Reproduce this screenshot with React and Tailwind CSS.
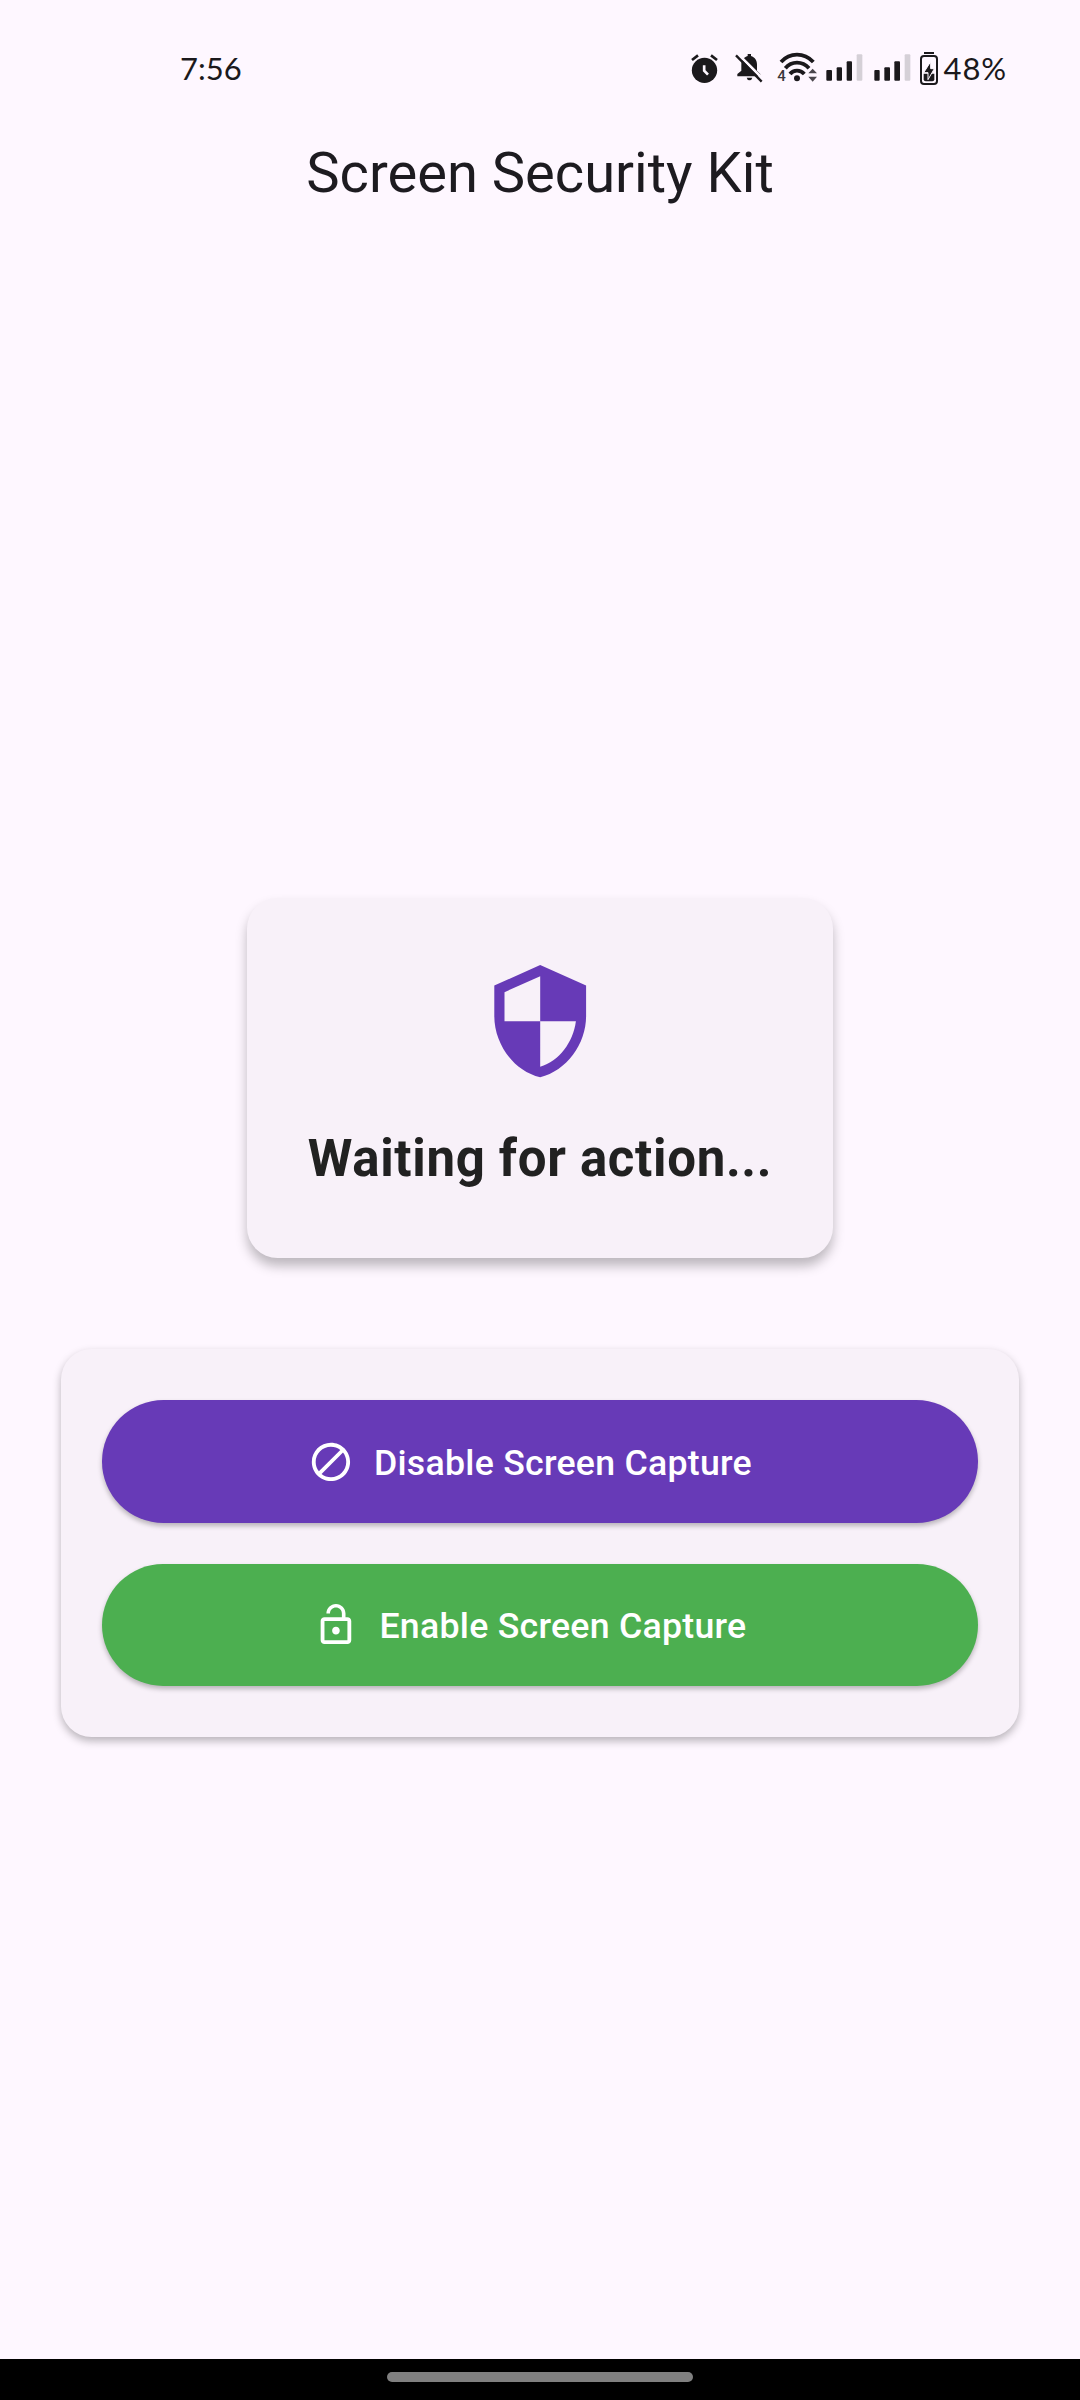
import React from "react";

function StatusIcons() {
  return (
    <svg className="h-[60px] w-[260px] shrink-0" viewBox="0 0 780 180" fill="#1b191c">
      {/* alarm */}
      <circle cx="73.5" cy="91" r="38" />
      <path d="M36 60L54 46M93 46L111 60" stroke="#1b191c" strokeWidth="8" fill="none" />
      <path d="M72.5 76V92L84 104" stroke="#fef7ff" strokeWidth="8" fill="none" />
      {/* muted bell */}
      <path d="M203 48V42H213V48C224 51 231 61 231 74V92L241 102V109H172V102L184 92V74C184 61 192 51 203 48Z" />
      <path d="M200 113H217Q215 121 208.5 121Q202 121 200 113Z" />
      <path d="M173 41L252 120" stroke="#fef7ff" strokeWidth="8" fill="none" />
      <path d="M168 46L245 125" stroke="#1b191c" strokeWidth="7" fill="none" />
      {/* wifi */}
      <circle cx="351" cy="115" r="9" />
      <g fill="none" stroke="#1b191c" strokeWidth="11.5">
        <path d="M303 66Q323 44 351 44Q379 44 400 66" />
        <path d="M316 85Q330 68 351 68Q372 68 387 85" />
        <path d="M330 102Q338 92 351 92Q364 92 373 102" />
      </g>
      <text x="292" y="122" fontSize="45" fontWeight="500" fontFamily="Roboto, sans-serif" fill="#3a373c">4</text>
      <path d="M385 100L398 86L411 100ZM385 110H411L398 125Z" fill="#4a464c" />
      {/* signal bars */}
      <g>
        <rect x="439" y="90" width="17" height="32" rx="3" />
        <rect x="470" y="82" width="16" height="40" rx="3" />
        <rect x="500" y="64" width="16" height="58" rx="3" />
        <rect x="530" y="43" width="17" height="79" rx="3" fill="#d5d0d7" />
        <rect x="583" y="90" width="16" height="32" rx="3" />
        <rect x="613" y="82" width="17" height="40" rx="3" />
        <rect x="643" y="64" width="17" height="58" rx="3" />
        <rect x="674" y="43" width="17" height="79" rx="3" fill="#d5d0d7" />
      </g>
      {/* charging battery */}
      <rect x="732" y="36" width="30" height="6" />
      <rect x="723" y="48" width="48" height="84" rx="9" fill="none" stroke="#1b191c" strokeWidth="6" />
      <path d="M731 101H763V118Q763 124 757 124H737Q731 124 731 118Z" />
      <path d="M752 65L731 98H744V119L763 86H752Z" stroke="#fef7ff" strokeWidth="3" />
    </svg>
  );
}

function Glyph({ d, className }) {
  return (
    <svg className={className} viewBox="0 0 24 24" fill="currentColor">
      <path d={d} />
    </svg>
  );
}

const SHIELD =
  "M12 1L3 5v6c0 5.55 3.84 10.74 9 12 5.16-1.26 9-6.45 9-12V5l-9-4zm0 10.99h7c-.53 4.12-3.28 7.79-7 8.94V12H5V6.3l7-3.11v8.8z";
const BLOCK =
  "M12 2C6.5 2 2 6.5 2 12s4.5 10 10 10 10-4.5 10-10S17.5 2 12 2zM4 12c0-4.4 3.6-8 8-8 1.8 0 3.5.6 4.9 1.7L5.7 16.9C4.6 15.5 4 13.8 4 12zm8 8c-1.8 0-3.5-.6-4.9-1.7L18.3 7.1C19.4 8.5 20 10.2 20 12c0 4.4-3.6 8-8 8z";
const UNLOCK =
  "M12 17c1.1 0 2-.9 2-2s-.9-2-2-2-2 .9-2 2 .9 2 2 2zm6-9h-1V6c0-2.76-2.24-5-5-5S7 3.24 7 6h1.9c0-1.71 1.39-3.1 3.1-3.1 1.71 0 3.1 1.39 3.1 3.1v2H6c-1.1 0-2 .9-2 2v10c0 1.1.9 2 2 2h12c1.1 0 2-.9 2-2V10c0-1.1-.9-2-2-2zm0 12H6V10h12v10z";

function ActionButton({ icon, label, color }) {
  return (
    <button
      className={`flex h-[122.4px] w-full items-center justify-center gap-[20.4px] rounded-full pr-[20.4px] text-white shadow-[0_3px_5px_rgba(0,0,0,0.26)] ${color}`}
    >
      <Glyph d={icon} className="size-[45.9px]" />
      <span className="pt-[3px] text-[35.7px] leading-[51px] font-medium tracking-[0.255px]">{label}</span>
    </button>
  );
}

export default function App() {
  return (
    <div className="flex h-[2400px] w-[1080px] flex-col overflow-hidden bg-[#fef7ff] font-['Roboto',sans-serif]">
      <div className="flex h-[100px] items-end justify-between pr-[72px] pl-[180px] text-[#1b191c]">
        <span className="h-[60px] font-['Lato',sans-serif] text-[31px] leading-[57px]">7:56</span>
        <div className="flex items-end">
          <StatusIcons />
          <span className="h-[60px] w-[68px] pl-[3.5px] font-['Lato',sans-serif] text-[31px] leading-[57px] tracking-[0.9px]">48%</span>
        </div>
      </div>
      <h1 className="mt-[38px] text-center text-[56.1px] leading-[71px] font-normal text-[#1d1b20]">Screen Security Kit</h1>

      <main className="mt-[689.4px] flex flex-col items-center gap-[91.6px]">
        <section className="flex h-[359.4px] w-[586px] flex-col items-center rounded-[30.6px] bg-[#f8f1f9] pt-[61.2px] shadow-[0_8px_12px_rgba(0,0,0,0.26)]">
          <Glyph d={SHIELD} className="size-[122.4px] text-[#673ab7]" />
          <p className="mt-[40.8px] text-[51px] leading-[72px] font-bold tracking-[0.67px] whitespace-nowrap text-[#212121]">Waiting for action...</p>
        </section>
        <section className="flex w-[957.6px] flex-col gap-[40.8px] rounded-[30.6px] bg-[#f8f1f9] px-[40.8px] py-[51px] shadow-[0_4px_8px_rgba(0,0,0,0.28)]">
          <ActionButton icon={BLOCK} label="Disable Screen Capture" color="bg-[#673ab7]" />
          <ActionButton icon={UNLOCK} label="Enable Screen Capture" color="bg-[#4caf50]" />
        </section>
      </main>

      <footer className="mt-auto flex h-[41px] shrink-0 justify-center bg-black pt-[13px]">
        <div className="h-[10px] w-[306px] rounded-full bg-[#808080]" />
      </footer>
    </div>
  );
}
